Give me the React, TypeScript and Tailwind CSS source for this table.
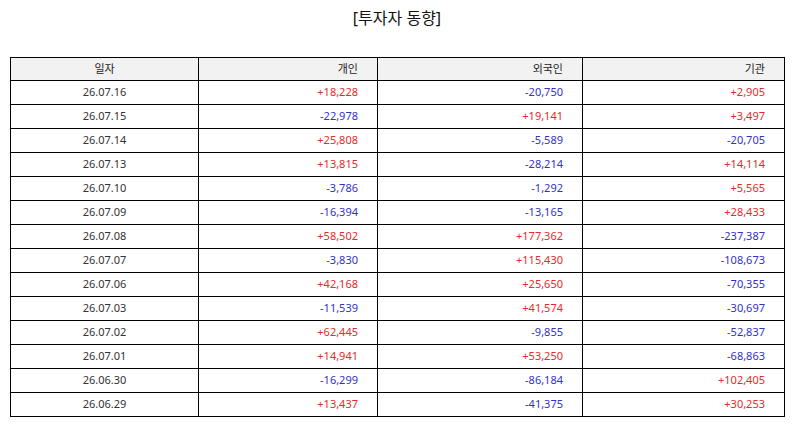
const rows: [string, string, string, string][] = [
  ["26.07.16", "+18,228", "-20,750", "+2,905"],
  ["26.07.15", "-22,978", "+19,141", "+3,497"],
  ["26.07.14", "+25,808", "-5,589", "-20,705"],
  ["26.07.13", "+13,815", "-28,214", "+14,114"],
  ["26.07.10", "-3,786", "-1,292", "+5,565"],
  ["26.07.09", "-16,394", "-13,165", "+28,433"],
  ["26.07.08", "+58,502", "+177,362", "-237,387"],
  ["26.07.07", "-3,830", "+115,430", "-108,673"],
  ["26.07.06", "+42,168", "+25,650", "-70,355"],
  ["26.07.03", "-11,539", "+41,574", "-30,697"],
  ["26.07.02", "+62,445", "-9,855", "-52,837"],
  ["26.07.01", "+14,941", "+53,250", "-68,863"],
  ["26.06.30", "-16,299", "-86,184", "+102,405"],
  ["26.06.29", "+13,437", "-41,375", "+30,253"],
];

const Num = ({ v }: { v: string }) => (
  <td
    className={`border border-black pr-[19px] text-right ${
      v.startsWith("-") ? "text-[#3232c8]" : "text-[#e42a2a]"
    }`}
  >
    {v}
  </td>
);

export default function App() {
  return (
    <div
      className="w-[794px] h-[425px] bg-white px-[10px] pt-[6px]"
      style={{ fontFamily: '"Noto Sans", "Noto Sans CJK KR", sans-serif' }}
    >
      <h1 className="text-center text-[16px] leading-[24px] text-[#111] h-[51px]">
        [투자자 동향]
      </h1>
      <table className="w-[775px] border-collapse table-fixed text-[11px] text-[#333]">
        <colgroup>
          <col className="w-[188px]" />
          <col className="w-[179px]" />
          <col className="w-[205px]" />
          <col />
        </colgroup>
        <thead>
          <tr className="h-[23px] bg-[#f2f2f2] text-[#222]">
            <th className="border border-black font-normal text-center">일자</th>
            <th className="border border-black font-normal text-right pr-[19px]">개인</th>
            <th className="border border-black font-normal text-right pr-[19px]">외국인</th>
            <th className="border border-black font-normal text-right pr-[19px]">기관</th>
          </tr>
        </thead>
        <tbody>
          {rows.map((r) => (
            <tr key={r[0]} className="h-[24px]">
              <td className="border border-black text-center">{r[0]}</td>
              <Num v={r[1]} />
              <Num v={r[2]} />
              <Num v={r[3]} />
            </tr>
          ))}
        </tbody>
      </table>
    </div>
  );
}
